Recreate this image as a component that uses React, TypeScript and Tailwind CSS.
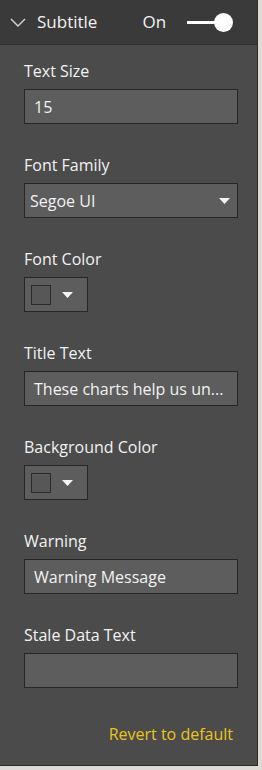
const font = { fontFamily: '"Open Sans", "Noto Sans", sans-serif' };

const Caret = () => (
  <svg width="11" height="6" viewBox="0 0 11 6" className="block">
    <path d="M0 0 L11 0 L5.5 6 Z" fill="#f4f4f4" />
  </svg>
);

const Label = ({ children }: { children: string }) => (
  <div className="text-[16px] leading-5 text-[#f2f2f2] h-5 whitespace-nowrap">{children}</div>
);

const TextBox = ({ value }: { value?: string }) => (
  <div className="mt-2 h-[35px] w-[214px] bg-[#5d5d5d] border border-[#262626] flex items-center px-[9px] text-[16px] text-[#f2f2f2] overflow-hidden whitespace-nowrap">
    {value}
  </div>
);

const SelectBox = ({ value }: { value: string }) => (
  <div className="mt-2 h-[35px] w-[214px] bg-[#5d5d5d] border border-[#262626] flex items-center justify-between pl-[5px] pr-[7px] text-[16px] text-[#f2f2f2]">
    <span>{value}</span>
    <Caret />
  </div>
);

const ColorButton = () => (
  <div className="mt-2 h-[35px] w-[64px] bg-[#5d5d5d] border border-[#262626] flex items-center pl-[6px] gap-[11px]">
    <div className="w-[20px] h-[20px] border-[1.5px] border-[#2a2a2a] bg-[#575757]" />
    <Caret />
  </div>
);

const Field = ({ label, children, last }: { label: string; children: React.ReactNode; last?: boolean }) => (
  <div className={last ? '' : 'mb-[31px]'}>
    <Label>{label}</Label>
    {children}
  </div>
);

export default function App() {
  return (
    <div className="w-[262px] h-[770px] bg-[#dddbd4]" style={font}>
      <div className="w-[258px] h-[766px] bg-[#4b4b4b] border-r border-b border-[#2c2c2c] flex flex-col">
        <div className="h-[45px] bg-[#3a3a3a] border-b border-[#2e2e2e] flex items-center shrink-0">
          <svg width="16" height="9" viewBox="0 0 16 9" className="ml-[10px] mt-[1px]">
            <path d="M1 1 L8 8 L15 1" stroke="#d8d8d8" strokeWidth="1.4" fill="none" />
          </svg>
          <span className="ml-[11px] text-[17px] text-[#f2f2f2]">Subtitle</span>
          <span className="ml-[45px] text-[17px] text-[#f2f2f2]">On</span>
          <div className="ml-[21px] flex items-center">
            <div className="w-[30px] h-[3px] bg-white" />
            <div className="w-[19px] h-[19px] rounded-full bg-white -ml-[3px]" />
          </div>
        </div>
        <div className="pl-6 pt-[16px] flex-1 flex flex-col">
          <Field label="Text Size">
            <TextBox value="15" />
          </Field>
          <Field label="Font Family">
            <SelectBox value="Segoe UI" />
          </Field>
          <Field label="Font Color">
            <ColorButton />
          </Field>
          <Field label="Title Text">
            <TextBox value="These charts help us un..." />
          </Field>
          <Field label="Background Color">
            <ColorButton />
          </Field>
          <Field label="Warning">
            <TextBox value="Warning Message" />
          </Field>
          <Field label="Stale Data Text" last>
            <TextBox />
          </Field>
          <div className="mt-[34px] w-[209px] text-right text-[16px] text-[#ecc51a]">Revert to default</div>
        </div>
      </div>
    </div>
  );
}
